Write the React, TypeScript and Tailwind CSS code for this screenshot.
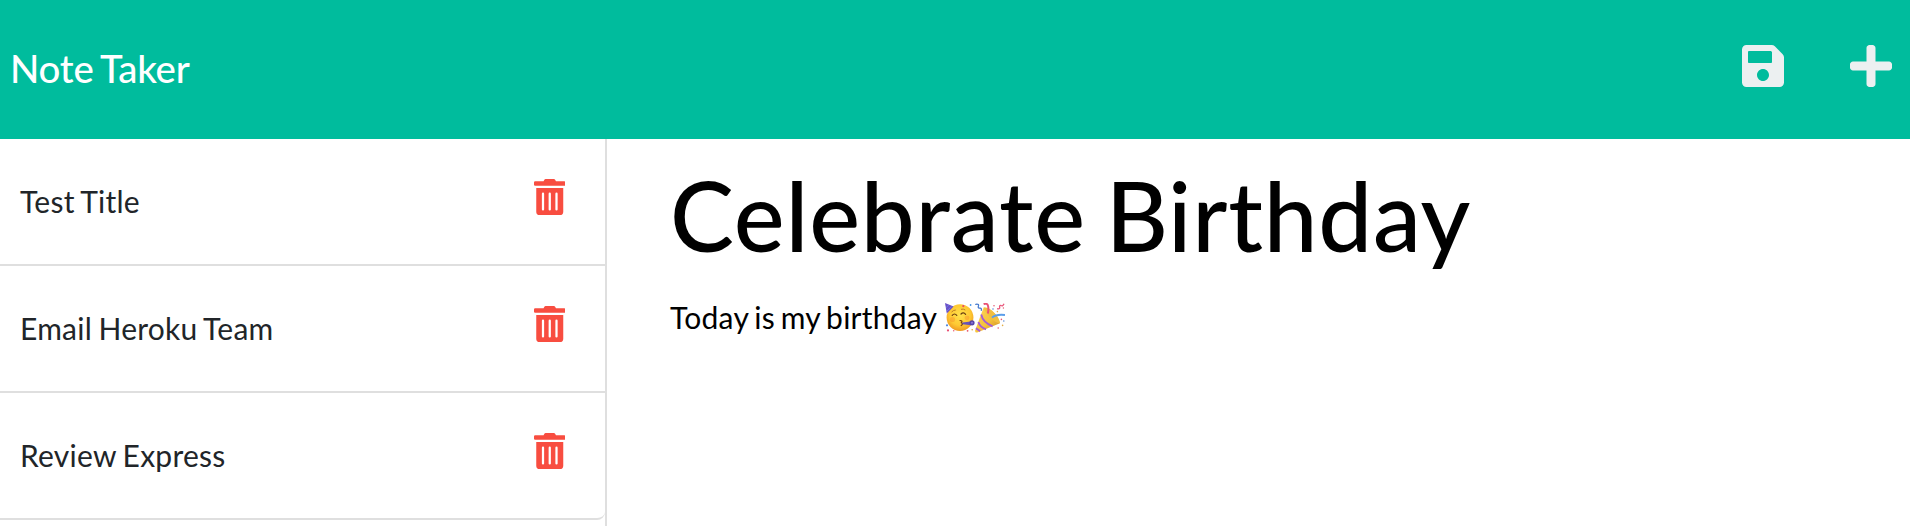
import React from "react";
import { FaPlus, FaSave, FaTrashAlt } from "react-icons/fa";

const notes = ["Test Title", "Email Heroku Team", "Review Express"];

function PartyFace() {
  return (
    <svg viewBox="0 0 30 30" className="h-[30px] w-[30px] shrink-0" role="img" aria-label="Partying face">
      <defs>
        <radialGradient id="face" cx="50%" cy="40%" r="60%">
          <stop offset="0" stopColor="#ffe14c" />
          <stop offset="0.65" stopColor="#fec933" />
          <stop offset="1" stopColor="#f09a22" />
        </radialGradient>
      </defs>
      <circle cx="15" cy="14.6" r="13.4" fill="url(#face)" />
      <path d="M0 0 8.6 3.6 1.8 10.6Z" fill="#6a50c8" />
      <path d="M1.1 4.6 3.9 1.9M1.6 8.4 6.6 3.3" stroke="#6b7fe6" strokeWidth="0.9" />
      <path d="M7.2 12.3q2.3-2.6 4.6 0M16 11q2.4-2.4 4.6.3" fill="none" stroke="#6a3d12" strokeWidth="1.2" strokeLinecap="round" />
      <path d="M6.8 8.8q1.6-1.8 3.6-1.8M16.4 6.2q2-.7 3.6.6" fill="none" stroke="#b8741f" strokeWidth="0.9" strokeLinecap="round" />
      <circle cx="7.5" cy="16.5" r="2.6" fill="#f5822c" opacity="0.35" />
      <circle cx="22" cy="14.8" r="2.4" fill="#f5822c" opacity="0.35" />
      <path d="M15 17.5q3 .2 1.4 2.2 2.2 1.2-.2 2.8" fill="none" stroke="#7a3d10" strokeWidth="1.2" strokeLinecap="round" />
      <path d="m17.5 19.6 8.5-1v3.6l-8.5-.9Z" fill="#6653b8" />
      <circle cx="27" cy="19.8" r="2.6" fill="#5745a8" />
      <circle cx="27" cy="19.8" r="1.1" fill="#8a73d7" />
      <circle cx="18.3" cy="3.1" r="1.1" fill="#ea4868" />
      <circle cx="25.6" cy="2" r="0.9" fill="#4594e8" />
      <circle cx="2" cy="22.3" r="1.1" fill="#4b83e2" />
      <circle cx="3" cy="27.4" r="1.1" fill="#e95276" />
      <circle cx="8.7" cy="27.8" r="0.8" fill="#ed647a" />
      <circle cx="22.6" cy="27.8" r="0.9" fill="#e95368" />
      <circle cx="27.2" cy="26.8" r="0.8" fill="#e4a52d" />
    </svg>
  );
}

function PartyPopper() {
  return (
    <svg viewBox="0 0 30 30" className="h-[30px] w-[30px] shrink-0" role="img" aria-label="Party popper">
      <defs>
        <linearGradient id="cone" x1="0" y1="0" x2="1" y2="1">
          <stop offset="0" stopColor="#fbd75a" />
          <stop offset="0.55" stopColor="#f6c23a" />
          <stop offset="1" stopColor="#c98a24" />
        </linearGradient>
      </defs>
      <path d="M8.6 4.6Q20 6 25 20.2L2.2 29.5Q-.2 29.9.2 27.3Z" fill="url(#cone)" />
      <path d="M8.8 4.6q4.6-.9 10.4 5.2 5.8 6 5.6 10.2-4.1.4-10-6-6.2-6.6-6-9.4Z" fill="#f2bf40" />
      <path d="M6.2 11.5q1.6 7.8 11.4 11.8M3.4 19q1.4 5.2 7.6 7.3M1 25.3l4.2 3" fill="none" stroke="#a55bd6" strokeWidth="1.8" />
      <path d="M0.8 1.3q3.8-.6 2.5 2.2-.6 1.5 1.8 1.6 1.8.2 1.2 2.2" fill="none" stroke="#4679ce" strokeWidth="1.3" strokeLinecap="round" />
      <path d="M8.6 1.2q3.8-1.6 4.5 1.9.7 3.3-.2 7.4" fill="none" stroke="#e95274" strokeWidth="2" />
      <path d="M17 14.6q3.9-3.6 13-2.6" fill="none" stroke="#5b9eea" strokeWidth="1.9" />
      <path d="M29 .8q-1.1 2.8-3 1.7-2-.3-1.3 1.8.3 2-2.7 1.3" fill="none" stroke="#e9577b" strokeWidth="1.3" />
      <g fill="#e75b75">
        <circle cx="19" cy="2.7" r="0.8" />
        <circle cx="28.4" cy="5" r="0.7" />
        <circle cx="26.4" cy="16.4" r="0.8" />
        <circle cx="23.2" cy="25" r="0.8" />
      </g>
      <g fill="#5d8edb">
        <circle cx="18" cy="6" r="0.8" />
        <circle cx="28.8" cy="18" r="0.8" />
      </g>
      <g fill="#e3ad43">
        <circle cx="22.4" cy="8.6" r="0.8" />
        <circle cx="27.6" cy="22.4" r="0.8" />
      </g>
    </svg>
  );
}

export default function App() {
  return (
    <div className="flex h-[526px] w-full flex-col overflow-hidden bg-white font-['Lato',sans-serif]">
      <header className="flex h-[139px] shrink-0 items-center justify-between bg-[#00bc9d] pr-[18px] pl-2.5 text-white">
        <h1 className="pb-[4px] text-[38.4px] leading-[58px] font-medium tracking-[-0.2px] [word-spacing:-2px]">Note Taker</h1>
        <div className="flex gap-[66px] pb-[7px] text-[#ecf0f1]">
          <button aria-label="Save note">
            <FaSave className="h-[48px] w-[42px]" />
          </button>
          <button aria-label="New note">
            <FaPlus className="h-[48px] w-[42px]" />
          </button>
        </div>
      </header>
      <div className="flex min-h-0 flex-1">
        <aside className="w-[607px] shrink-0 border-r-2 border-[#dfdfdf]">
          <ul className="overflow-hidden rounded-br-[8px] border-b-2 border-[#dfdfdf]">
            {notes.map((note) => (
              <li
                key={note}
                className="flex h-[127px] items-start justify-between border-b-2 border-[#dfdfdf] pt-10 pr-10 pl-5 text-[30px] leading-[45px] tracking-[0.25px] text-[#212529] [word-spacing:-1.5px] last:h-[125px] last:border-b-0"
              >
                <span>{note}</span>
                <FaTrashAlt className="h-[36px] w-[31.5px] text-[#f84d40]" />
              </li>
            ))}
          </ul>
        </aside>
        <main className="min-w-0 flex-1 pt-1 pl-[63px] text-black">
          <h2 className="text-[96px] leading-[144px] font-medium tracking-[0.8px] whitespace-nowrap [word-spacing:-5px]">
            Celebrate Birthday
          </h2>
          <div className="mt-2 flex text-[30px] leading-[45px]">
            <p className="tracking-[0.25px] whitespace-pre [word-spacing:-2.1px]">Today is my birthday </p>
            <span className="flex pt-2 pl-[2.5px]">
              <PartyFace />
              <PartyPopper />
            </span>
          </div>
        </main>
      </div>
    </div>
  );
}
